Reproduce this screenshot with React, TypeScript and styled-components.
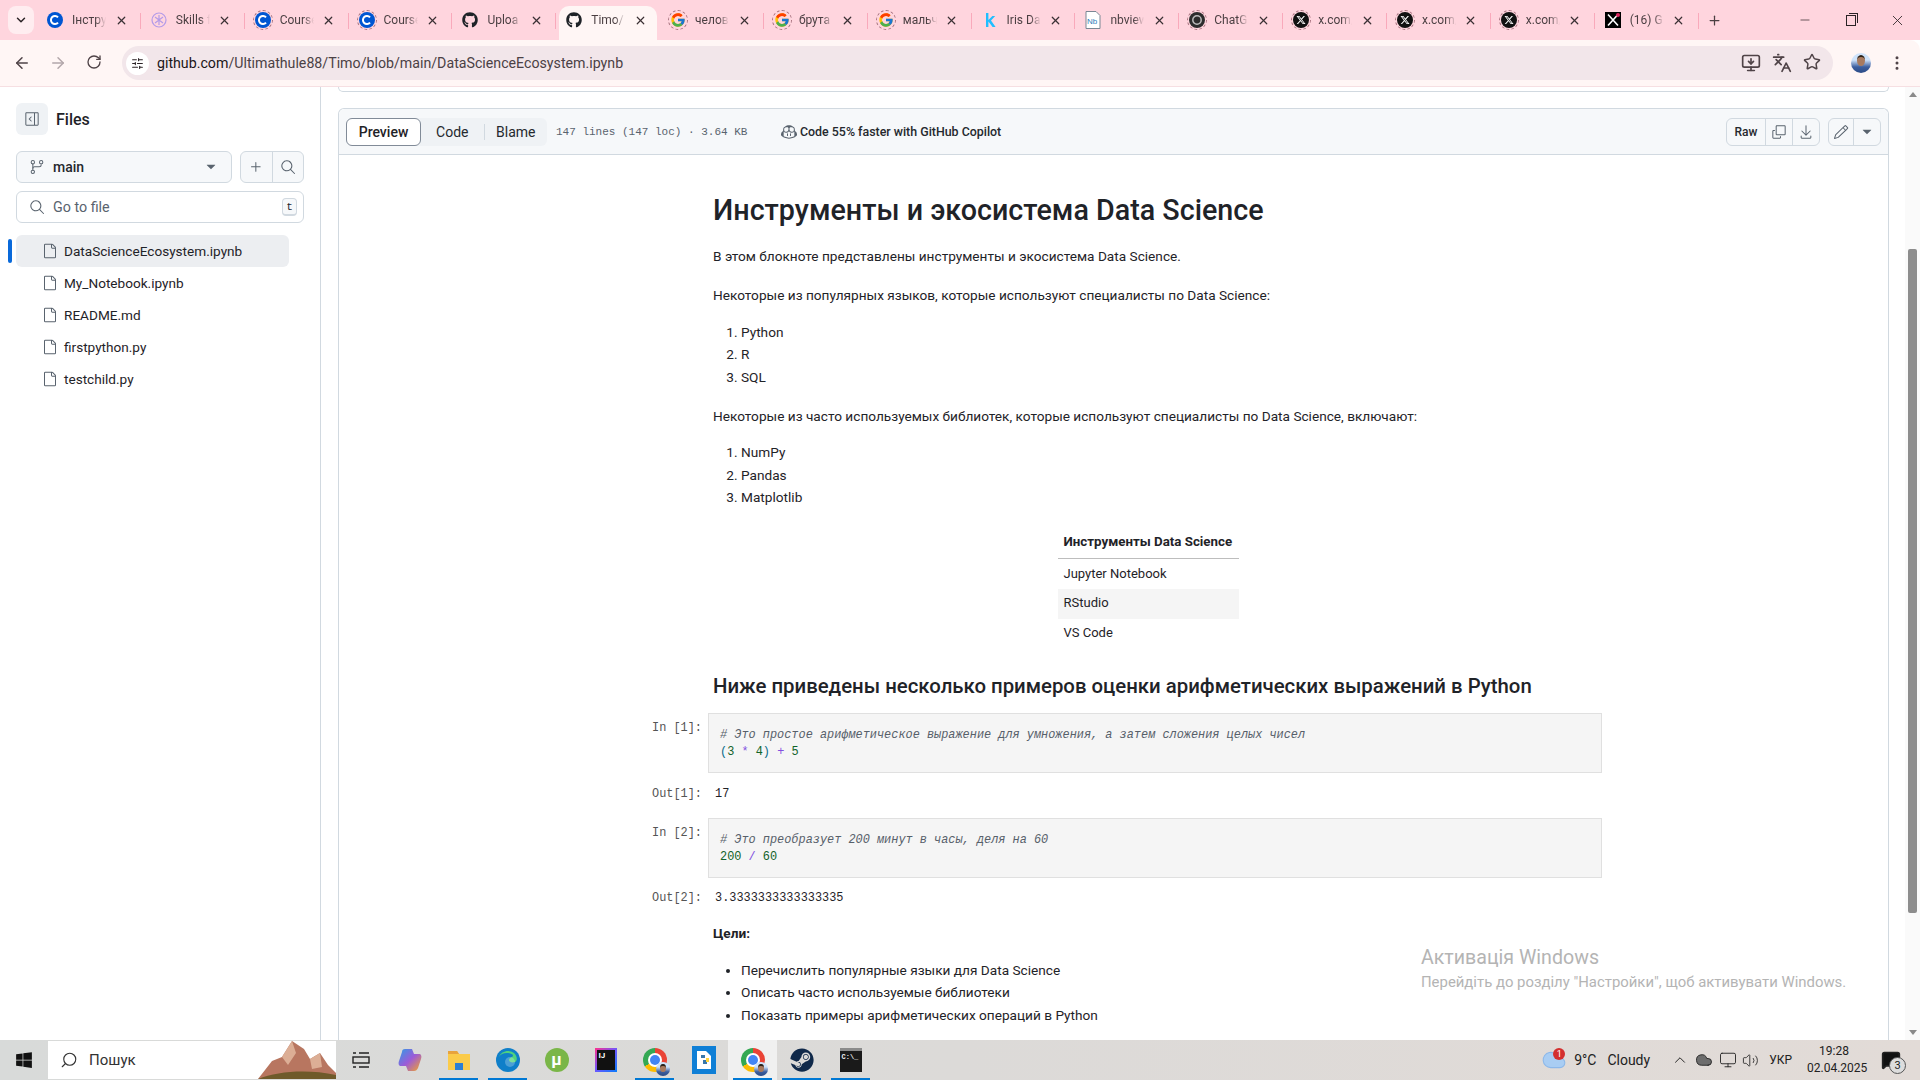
import React from 'react';
import styled, { createGlobalStyle } from 'styled-components';
import { FaGithub, FaXTwitter, FaSteam, FaWindows } from 'react-icons/fa6';
import { FcGoogle } from 'react-icons/fc';
import {
  GoCopilot,
  GoCopy,
  GoDownload,
  GoFile,
  GoGitBranch,
  GoPencil,
  GoPlus,
  GoSearch,
  GoSidebarExpand,
  GoTriangleDown,
} from 'react-icons/go';
import {
  ArrowLeft,
  ArrowRight,
  ChevronDown,
  ChevronUp,
  Cloud,
  Minus,
  MessageSquare,
  Monitor,
  MoreVertical,
  Plus,
  RotateCw,
  Search,
  SlidersHorizontal,
  Star,
  Languages,
  MonitorDown,
  Volume2,
  X,
} from 'lucide-react';

const UI_FONT = `Roboto, "Noto Sans", sans-serif`;
const MONO_FONT = `"Liberation Mono", monospace`;

const GlobalStyle = createGlobalStyle`
  html, body {
    margin: 0;
    padding: 0;
    height: 100%;
    overflow: hidden;
    background: #fff;
  }
  body {
    font-family: ${UI_FONT};
    color: #1f2328;
  }
  * {
    box-sizing: border-box;
  }
`;

const Screen = styled.div`
  position: relative;
  width: 1920px;
  height: 1080px;
  display: flex;
  flex-direction: column;
  overflow: hidden;
`;

/* browser chrome */

const TabStrip = styled.div`
  height: 40px;
  flex: none;
  background: #ffd5de;
  display: flex;
  align-items: flex-end;
  position: relative;
`;

const TabMenu = styled.div`
  width: 26px;
  height: 28px;
  margin: 0 3px 6px 8px;
  border-radius: 8px;
  background: #ffedf0;
  display: flex;
  align-items: center;
  justify-content: center;
  color: #2b2326;
`;

const Tab = styled.div<{ $active?: boolean }>`
  width: ${({ $active }) => ($active ? '97.85px' : '103.85px')};
  margin: ${({ $active }) => ($active ? '0 3px' : '0')};
  height: 34px;
  flex: none;
  padding: 0 0 6px ${({ $active }) => ($active ? '7px' : '10px')};
  display: flex;
  align-items: center;
  position: relative;
  background: ${({ $active }) => ($active ? '#fff6f5' : 'transparent')};
  border-radius: 10px 10px 0 0;

  &::after {
    content: '';
    display: ${({ $active }) => ($active ? 'none' : 'block')};
    position: absolute;
    right: 0;
    top: 7px;
    width: 1px;
    height: 16px;
    background: #f9a9bb;
  }
`;

const TabIcon = styled.div<{ $ring?: boolean }>`
  width: 16px;
  height: 16px;
  flex: none;
  display: flex;
  align-items: center;
  justify-content: center;
  position: relative;
  border-radius: 50%;
  outline: ${({ $ring }) => ($ring ? '1.5px dashed #a5707c' : 'none')};
  outline-offset: 1px;
`;

const TabTitle = styled.div`
  width: 34px;
  margin-left: 9px;
  font-size: 12px;
  color: #4b3f42;
  white-space: nowrap;
  overflow: hidden;
  mask-image: linear-gradient(to right, #000 70%, transparent 100%);
`;

const TabClose = styled.div`
  margin-left: 8px;
  width: 14px;
  display: flex;
  justify-content: center;
  color: #3a3034;
`;

const NewTab = styled.div`
  width: 32px;
  height: 28px;
  margin-bottom: 6px;
  display: flex;
  align-items: center;
  justify-content: center;
  color: #4b3f42;
`;

const WindowControls = styled.div`
  margin-left: auto;
  height: 40px;
  display: flex;
  align-self: flex-start;
`;

const WindowButton = styled.div`
  width: 46px;
  height: 40px;
  display: flex;
  align-items: center;
  justify-content: center;
  color: #2b2326;
`;

const RestoreGlyph = styled.div`
  width: 10px;
  height: 11px;
  border: 1px solid #2b2326;
  position: relative;

  &::after {
    content: '';
    position: absolute;
    top: -3px;
    right: -3px;
    width: 8px;
    height: 9px;
    border-top: 1px solid #2b2326;
    border-right: 1px solid #2b2326;
  }
`;

const Toolbar = styled.div`
  height: 47px;
  flex: none;
  background: #fff6f5;
  border-radius: 0 10px 0 0;
  border-bottom: 1px solid #f6dfe2;
  display: flex;
  align-items: center;
`;

const NavButton = styled.div<{ $dim?: boolean }>`
  width: 36px;
  display: flex;
  justify-content: center;
  color: ${({ $dim }) => ($dim ? '#b3a7aa' : '#4f4347')};
`;

const NavGroup = styled.div`
  display: flex;
  padding-left: 4px;
  width: 122px;
`;

const Omnibox = styled.div`
  width: 1711px;
  height: 34px;
  border-radius: 17px;
  background: #f2e6ea;
  display: flex;
  align-items: center;
  padding: 0 4px;
`;

const SiteBadge = styled.div`
  width: 23px;
  height: 23px;
  border-radius: 50%;
  background: #fff;
  display: flex;
  align-items: center;
  justify-content: center;
  color: #2b2326;
`;

const UrlText = styled.div`
  margin-left: 8px;
  font-size: 14.2px;
  color: #4b4145;
  span {
    color: #1b1518;
  }
`;

const OmniActions = styled.div`
  margin-left: auto;
  display: flex;
  gap: 11px;
  padding-right: 8px;
  color: #4f4347;
`;

const Avatar = styled.div<{ $size: number }>`
  width: ${({ $size }) => $size}px;
  height: ${({ $size }) => $size}px;
  flex: none;
  border-radius: 50%;
  background: linear-gradient(180deg, #cfe3fb 0%, #cfe3fb 35%, #3c5e9e 70%, #2b4a86 100%);
  position: relative;
  overflow: hidden;

  &::after {
    content: '';
    position: absolute;
    left: 30%;
    top: 12%;
    width: 40%;
    height: 45%;
    border-radius: 50%;
    background: #a87a5f;
    border-top: 2px solid #2a2018;
  }
`;

const ProfileSlot = styled.div`
  margin-left: 18px;
  display: flex;
  align-items: center;
  gap: 17px;
  color: #4f4347;
`;

/* page */

const Page = styled.div`
  flex: 1;
  min-height: 0;
  display: flex;
  background: #fff;
`;

const Sidebar = styled.aside`
  width: 321px;
  flex: none;
  border-right: 1px solid #d1d9e0;
  padding: 16px 16px 0;
`;

const SidebarHead = styled.div`
  display: flex;
  align-items: center;
  gap: 8px;
  height: 32px;
`;

const SquareToggle = styled.div`
  width: 32px;
  height: 32px;
  border-radius: 6px;
  background: #eff2f5;
  color: #59636e;
  display: flex;
  align-items: center;
  justify-content: center;
`;

const FilesTitle = styled.div`
  font-size: 16px;
  font-weight: 500;
`;

const BranchRow = styled.div`
  display: flex;
  margin-top: 16px;
  width: 288px;
  gap: 8px;
`;

const BranchButton = styled.div`
  flex: 1;
  height: 32px;
  border: 1px solid #d1d9e0;
  border-radius: 6px;
  background: #f6f8fa;
  display: flex;
  align-items: center;
  padding: 0 12px;
  gap: 8px;
  color: #59636e;
  font-size: 14px;

  strong {
    color: #25292e;
    font-weight: 500;
    flex: 1;
  }
`;

const IconPair = styled.div`
  width: 64px;
  height: 32px;
  display: flex;
  border: 1px solid #d1d9e0;
  border-radius: 6px;
  background: #f6f8fa;
  color: #59636e;
`;

const PairCell = styled.div<{ $divider?: boolean }>`
  flex: 1;
  display: flex;
  align-items: center;
  justify-content: center;
  border-right: ${({ $divider }) => ($divider ? '1px solid #d1d9e0' : 'none')};
`;

const FileSearch = styled.div`
  width: 288px;
  height: 32px;
  margin-top: 8px;
  border: 1px solid #d1d9e0;
  border-radius: 6px;
  display: flex;
  align-items: center;
  padding: 0 6px 0 12px;
  gap: 8px;
  color: #59636e;
  font-size: 14.3px;
`;

const Kbd = styled.div`
  margin-left: auto;
  width: 15px;
  height: 18px;
  border: 1px solid #d1d9e0;
  border-bottom-width: 2px;
  border-radius: 4px;
  background: #f6f8fa;
  font-family: ${MONO_FONT};
  font-size: 11px;
  color: #25292e;
  display: flex;
  align-items: center;
  justify-content: center;
`;

const FileTree = styled.div`
  margin-top: 12px;
  width: 273px;
`;

const FileRow = styled.div<{ $active?: boolean }>`
  position: relative;
  height: 32px;
  border-radius: 6px;
  background: ${({ $active }) => ($active ? '#eceef1' : 'transparent')};
  padding-left: 26px;
  display: flex;
  align-items: center;
  gap: 6px;
  font-size: 13.6px;
  color: #1f2328;

  svg {
    color: #59636e;
    flex: none;
  }

  &::before {
    content: '';
    display: ${({ $active }) => ($active ? 'block' : 'none')};
    position: absolute;
    left: -8px;
    top: 4px;
    width: 4px;
    height: 24px;
    border-radius: 2px;
    background: #0969da;
  }
`;

const Content = styled.main`
  flex: 1;
  min-width: 0;
  padding-left: 17px;
  overflow: hidden;
`;

const PreviousBox = styled.div`
  width: 1551px;
  height: 5px;
  border: 1px solid #d1d9e0;
  border-top: none;
  border-radius: 0 0 6px 6px;
`;

const BlobBox = styled.section`
  width: 1551px;
  margin-top: 16px;
  border: 1px solid #d1d9e0;
  border-bottom: none;
  border-radius: 6px 6px 0 0;
  min-height: 1000px;
`;

const BlobHeader = styled.header`
  height: 46px;
  background: #f6f8fa;
  border-bottom: 1px solid #d1d9e0;
  border-radius: 6px 6px 0 0;
  display: flex;
  align-items: center;
  padding: 0 7px;
  font-size: 14px;
`;

const Segmented = styled.div`
  width: 201px;
  height: 28px;
  background: #eff2f5;
  border-radius: 6px;
  display: flex;
  align-items: center;
`;

const SegmentPreview = styled.div`
  width: 75px;
  height: 28px;
  background: #fff;
  border: 1px solid #818b98;
  border-radius: 6px;
  display: flex;
  align-items: center;
  justify-content: center;
  font-weight: 500;
`;

const Segment = styled.div<{ $divider?: boolean }>`
  flex: 1;
  height: 16px;
  display: flex;
  align-items: center;
  justify-content: center;
  color: #25292e;
  border-right: ${({ $divider }) => ($divider ? '1px solid #d1d9e0' : 'none')};
`;

const BlobStats = styled.div`
  margin-left: 9px;
  font-family: ${MONO_FONT};
  font-size: 11px;
  color: #59636e;
  white-space: nowrap;
  width: 225px;
`;

const CopilotNote = styled.div`
  display: flex;
  align-items: center;
  gap: 3px;
  font-size: 12.4px;
  font-weight: 500;
  color: #25292e;
  white-space: nowrap;

  svg {
    color: #59636e;
  }
`;

const HeaderActions = styled.div`
  margin-left: auto;
  display: flex;
  gap: 8px;
`;

const ButtonGroup = styled.div`
  display: flex;
  height: 28px;
  border: 1px solid #d1d9e0;
  border-radius: 6px;
  color: #59636e;
  background: #f6f8fa;
`;

const GroupButton = styled.div<{ $w: number; $divider?: boolean }>`
  width: ${({ $w }) => $w}px;
  display: flex;
  align-items: center;
  justify-content: center;
  font-size: 12px;
  font-weight: 500;
  color: #59636e;
  border-right: ${({ $divider }) => ($divider ? '1px solid #d1d9e0' : 'none')};
`;

const RawLabel = styled.span`
  color: #25292e;
`;

/* notebook */

const Notebook = styled.div`
  padding-left: 313px;
  width: 1267px;
`;

const Markdown = styled.div`
  margin-left: 61px;
  width: 870px;
  font-size: 13.65px;
  line-height: 22.4px;
  color: #1f2328;
`;

const Title = styled.h1`
  margin: 0;
  padding-top: 35px;
  font-size: 28.7px;
  line-height: 40px;
  font-weight: 500;
  color: #1f2328;
`;

const Para = styled.p`
  margin: 17px 0 0;
`;

const Lead = styled.p`
  margin: 15px 0 0;
`;

const Numbered = styled.ol`
  margin: 14px 0 0;
  padding-left: 28px;
`;

const Bulleted = styled.ul`
  margin: 15px 0 0;
  padding-left: 28px;
`;

const Item = styled.li``;

const TableWrap = styled.div`
  margin-top: 18px;
  display: flex;
  justify-content: center;
`;

const ToolTable = styled.table`
  width: 181px;
  border-collapse: collapse;
  font-size: 13px;

  th {
    height: 32px;
    padding: 0 6px;
    text-align: left;
    font-size: 13.3px;
    font-weight: 700;
    white-space: nowrap;
    border-bottom: 1px solid #bdbdbd;
  }

  td {
    height: 30px;
    padding: 0 6px;
  }

  tbody tr:nth-child(even) {
    background: #f5f5f5;
  }
`;

const SectionTitle = styled.h2`
  margin: 22px 0 0;
  font-size: 20.37px;
  line-height: 30px;
  font-weight: 500;
`;

const CellRow = styled.div<{ $gap: number }>`
  display: flex;
  margin-top: ${({ $gap }) => $gap}px;
  font-family: ${MONO_FONT};
  font-size: 11.9px;
  line-height: 17px;
`;

const Prompt = styled.div<{ $out?: boolean }>`
  width: 56px;
  flex: none;
  padding-top: ${({ $out }) => ($out ? '0' : '7px')};
  color: #555;
`;

const CodeCell = styled.pre`
  margin: 0;
  width: 894px;
  height: 60px;
  padding: 13px 11px;
  background: #f5f5f5;
  border: 1px solid #e0e0e0;
  font: inherit;
  color: #1f2328;
`;

const OutValue = styled.div`
  padding-left: 7px;
  color: #1f2328;
`;

const Comment = styled.span`
  font-style: italic;
  color: #57606a;
`;

const Num = styled.span`
  color: #116329;
`;

const Op = styled.span`
  color: #8250df;
`;

const Paren = styled.span`
  color: #0a6b8a;
`;

const Scrollbar = styled.div`
  width: 15px;
  flex: none;
  background: #fafafa;
  display: flex;
  flex-direction: column;
  align-items: center;
`;

const ScrollArrow = styled.div<{ $down?: boolean }>`
  width: 0;
  height: 0;
  margin-top: ${({ $down }) => ($down ? 'auto' : '5px')};
  margin-bottom: ${({ $down }) => ($down ? '5px' : '0')};
  border-left: 4px solid transparent;
  border-right: 4px solid transparent;
  ${({ $down }) => ($down ? 'border-top: 5px solid #8a8a8a;' : 'border-bottom: 5px solid #8a8a8a;')}
`;

const ScrollThumb = styled.div`
  width: 9px;
  height: 664px;
  margin-top: 152px;
  background: #8d8d8d;
  border-radius: 2px;
`;

/* windows taskbar */

const Taskbar = styled.div`
  height: 40px;
  flex: none;
  background: linear-gradient(90deg, #d8dad9 0%, #dcdad8 50%, #e2dbd7 100%);
  display: flex;
  align-items: center;
`;

const StartSlot = styled.div`
  width: 48px;
  display: flex;
  justify-content: center;
  color: #111;
`;

const SearchBox = styled.div`
  width: 288px;
  height: 38px;
  background: #fff;
  display: flex;
  align-items: center;
  padding-left: 12px;
  gap: 11px;
  font-size: 15px;
  color: #333;
  position: relative;
  overflow: hidden;
`;

const Mountain = styled.svg`
  position: absolute;
  right: 0;
  bottom: 0;
`;

const AppList = styled.div`
  display: flex;
  height: 40px;
`;

const AppSlot = styled.div<{ $open?: boolean; $focus?: boolean }>`
  width: 49px;
  height: 40px;
  display: flex;
  align-items: center;
  justify-content: center;
  background: ${({ $focus }) => ($focus ? '#f0f0f0' : 'transparent')};
  position: relative;

  &::after {
    content: '';
    display: ${({ $open }) => ($open ? 'block' : 'none')};
    position: absolute;
    left: 5px;
    right: 5px;
    bottom: 0;
    height: 2px;
    background: #0078d4;
  }
`;

const ChromeDot = styled.div`
  width: 24px;
  height: 24px;
  border-radius: 50%;
  background: conic-gradient(#ea4335 0 33%, #fbbc05 33% 66%, #34a853 66% 100%);
  position: relative;

  &::after {
    content: '';
    position: absolute;
    inset: 7px;
    border-radius: 50%;
    background: #4285f4;
    box-shadow: 0 0 0 2px #fff;
  }
`;

const AvatarBadge = styled.div`
  position: absolute;
  right: 9px;
  bottom: 4px;
  z-index: 1;
`;

const IdeSquare = styled.div`
  width: 22px;
  height: 24px;
  background: linear-gradient(135deg, #ff318c, #6b57ff 50%, #087cfa);
  padding: 2px;
`;

const IdeInner = styled.div`
  width: 100%;
  height: 100%;
  background: #111;
  color: #fff;
  font: 700 8px/9px ${UI_FONT};
  padding: 1px 2px;
`;

const TerminalSquare = styled.div`
  width: 22px;
  height: 24px;
  background: #1a1a1a;
  border-top: 3px solid #8b8b8b;
  color: #eee;
  font: 700 7px/9px ${MONO_FONT};
  padding: 2px;
`;

const TorrentDot = styled.div`
  width: 24px;
  height: 24px;
  border-radius: 50%;
  background: #7ab648;
  color: #fff;
  font: 700 17px/22px ${UI_FONT};
  text-align: center;
`;

const Tray = styled.div`
  margin-left: auto;
  display: flex;
  align-items: center;
  height: 40px;
  color: #222;
`;

const Weather = styled.div`
  display: flex;
  align-items: center;
  position: relative;
  width: 127px;
  font-size: 14px;
  padding-left: 33px;
  gap: 11px;
  white-space: nowrap;
`;

const WeatherCloud = styled.div`
  position: absolute;
  left: 0;
  top: -5px;
  color: #8cb8ea;
`;

const RedBadge = styled.div`
  position: absolute;
  left: 12px;
  top: 1px;
  width: 12px;
  height: 12px;
  border-radius: 50%;
  background: #d32f2f;
  color: #fff;
  font-size: 9px;
  line-height: 12px;
  text-align: center;
`;

const TrayIcon = styled.div<{ $w: number }>`
  width: ${({ $w }) => $w}px;
  display: flex;
  justify-content: center;
`;

const Lang = styled.div`
  margin-left: 9px;
  font-size: 12px;
`;

const Clock = styled.div`
  margin-left: 15px;
  width: 54px;
  font-size: 12px;
  line-height: 17px;
  text-align: center;
  white-space: nowrap;
`;

const Notifications = styled.div`
  width: 59px;
  display: flex;
  justify-content: center;
  position: relative;
`;

const NotifyCount = styled.div`
  position: absolute;
  left: 28px;
  top: 7px;
  width: 17px;
  height: 17px;
  border-radius: 50%;
  border: 1px solid #555;
  background: #ddd;
  font-size: 11px;
  line-height: 15px;
  text-align: center;
`;

const Watermark = styled.div`
  position: absolute;
  left: 1421px;
  top: 944px;
  color: #b4b4b4;
  font-size: 14.9px;
  line-height: 20px;
  white-space: nowrap;
`;

const WatermarkTitle = styled.div`
  font-size: 19.6px;
  line-height: 28px;
`;

const RoundX = styled.span`
  display: flex;
  width: 16px;
  height: 16px;
  border-radius: 8px;
  background: #111;
  align-items: center;
  justify-content: center;
`;

const MirroredSearch = styled(Search)`
  transform: scaleX(-1);
`;

const BlueC = () => (
  <svg width="16" height="16" viewBox="0 0 16 16">
    <circle cx="8" cy="8" r="8" fill="#0056d2" />
    <path d="M11 5.4a4 4 0 1 0 0 5.2" fill="none" stroke="#fff" strokeWidth="2" />
  </svg>
);

const SkillsIcon = () => (
  <svg width="16" height="16" viewBox="0 0 16 16" fill="none" stroke="#b49be8" strokeWidth="1.2">
    <circle cx="8" cy="8" r="7" />
    <path d="M8 3v10M4 5l8 6M12 5l-8 6" />
  </svg>
);

const KaggleK = () => (
  <svg width="16" height="16" viewBox="0 0 16 16" fill="#20beff">
    <path d="M4 1h2.4v7l4-4h2.8L9 8.4 13.6 15h-3L6.400 9.600V15H4z" />
  </svg>
);

const NbIcon = () => (
  <svg width="16" height="18" viewBox="0 0 16 18">
    <path d="M1 .5h10l4 4v13H1z" fill="#fff" stroke="#7a8794" />
    <text x="2" y="13" fontSize="8" fontFamily="Liberation Sans" fill="#2b7bb9">Nb</text>
  </svg>
);

const GptIcon = () => (
  <svg width="16" height="16" viewBox="0 0 16 16">
    <circle cx="8" cy="8" r="8" fill="#2d2d2d" />
    <circle cx="8" cy="8" r="4.200" fill="none" stroke="#bbb" strokeWidth="1.500" />
  </svg>
);

const XBlack = () => (
  <TabIcon>
    <svg width="16" height="16" viewBox="0 0 16 16">
      <rect width="16" height="16" fill="#000" />
      <path d="M3 2.500l10 11M13 2.500l-10 11" stroke="#fff" strokeWidth="1.600" />
      <circle cx="13" cy="3" r="2" fill="#e0245e" />
    </svg>
  </TabIcon>
);

const XRound = () => (
  <RoundX>
    <FaXTwitter size={10} color="#fff" />
  </RoundX>
);

const tabs: { title: string; icon: React.ReactNode; ring?: boolean; active?: boolean }[] = [
  { title: 'Інстру', icon: <BlueC /> },
  { title: 'Skills f', icon: <SkillsIcon /> },
  { title: 'Course', icon: <BlueC />, ring: true },
  { title: 'Course', icon: <BlueC />, ring: true },
  { title: 'Uploa', icon: <FaGithub size={16} color="#1f2328" /> },
  { title: 'Timo/', icon: <FaGithub size={16} color="#1f2328" />, active: true },
  { title: 'челов', icon: <FcGoogle size={16} />, ring: true },
  { title: 'брута', icon: <FcGoogle size={16} />, ring: true },
  { title: 'мальч', icon: <FcGoogle size={16} />, ring: true },
  { title: 'Iris Da', icon: <KaggleK /> },
  { title: 'nbview', icon: <NbIcon /> },
  { title: 'ChatG', icon: <GptIcon />, ring: true },
  { title: 'x.com/', icon: <XRound />, ring: true },
  { title: 'x.com/', icon: <XRound />, ring: true },
  { title: 'x.com/', icon: <XRound />, ring: true },
];

const files = [
  'DataScienceEcosystem.ipynb',
  'My_Notebook.ipynb',
  'README.md',
  'firstpython.py',
  'testchild.py',
];

const App: React.FC = () => {
  return (
    <Screen>
      <GlobalStyle />
      <TabStrip>
        <TabMenu>
          <ChevronDown size={14} strokeWidth={2.5} />
        </TabMenu>
        {tabs.map((tab, i) => (
          <Tab key={i} $active={tab.active}>
            <TabIcon $ring={tab.ring}>{tab.icon}</TabIcon>
            <TabTitle>{tab.title}</TabTitle>
            <TabClose>
              <X size={13} strokeWidth={2.2} />
            </TabClose>
          </Tab>
        ))}
        <Tab>
          <XBlack />
          <TabTitle>(16) G</TabTitle>
          <TabClose>
            <X size={13} strokeWidth={2.2} />
          </TabClose>
        </Tab>
        <NewTab>
          <Plus size={15} />
        </NewTab>
        <WindowControls>
          <WindowButton>
            <Minus size={14} strokeWidth={1.2} />
          </WindowButton>
          <WindowButton>
            <RestoreGlyph />
          </WindowButton>
          <WindowButton>
            <X size={17} strokeWidth={1.2} />
          </WindowButton>
        </WindowControls>
      </TabStrip>

      <Toolbar>
        <NavGroup>
          <NavButton>
            <ArrowLeft size={18} />
          </NavButton>
          <NavButton $dim>
            <ArrowRight size={18} />
          </NavButton>
          <NavButton>
            <RotateCw size={16} />
          </NavButton>
        </NavGroup>
        <Omnibox>
          <SiteBadge>
            <SlidersHorizontal size={13} />
          </SiteBadge>
          <UrlText>
            <span>github.com</span>/Ultimathule88/Timo/blob/main/DataScienceEcosystem.ipynb
          </UrlText>
          <OmniActions>
            <MonitorDown size={20} />
            <Languages size={20} />
            <Star size={18} />
          </OmniActions>
        </Omnibox>
        <ProfileSlot>
          <Avatar $size={20} />
          <MoreVertical size={18} />
        </ProfileSlot>
      </Toolbar>

      <Page>
        <Sidebar>
          <SidebarHead>
            <SquareToggle>
              <GoSidebarExpand size={16} />
            </SquareToggle>
            <FilesTitle>Files</FilesTitle>
          </SidebarHead>
          <BranchRow>
            <BranchButton>
              <GoGitBranch size={16} />
              <strong>main</strong>
              <GoTriangleDown size={16} />
            </BranchButton>
            <IconPair>
              <PairCell $divider>
                <GoPlus size={16} />
              </PairCell>
              <PairCell>
                <GoSearch size={16} />
              </PairCell>
            </IconPair>
          </BranchRow>
          <FileSearch>
            <GoSearch size={16} />
            Go to file
            <Kbd>t</Kbd>
          </FileSearch>
          <FileTree>
            {files.map((name, i) => (
              <FileRow key={name} $active={i === 0}>
                <GoFile size={16} />
                {name}
              </FileRow>
            ))}
          </FileTree>
        </Sidebar>

        <Content>
          <PreviousBox />
          <BlobBox>
            <BlobHeader>
              <Segmented>
                <SegmentPreview>Preview</SegmentPreview>
                <Segment $divider>Code</Segment>
                <Segment>Blame</Segment>
              </Segmented>
              <BlobStats>147 lines (147 loc) · 3.64 KB</BlobStats>
              <CopilotNote>
                <GoCopilot size={16} />
                Code 55% faster with GitHub Copilot
              </CopilotNote>
              <HeaderActions>
                <ButtonGroup>
                  <GroupButton $w={39} $divider>
                    <RawLabel>Raw</RawLabel>
                  </GroupButton>
                  <GroupButton $w={27} $divider>
                    <GoCopy size={16} />
                  </GroupButton>
                  <GroupButton $w={26}>
                    <GoDownload size={16} />
                  </GroupButton>
                </ButtonGroup>
                <ButtonGroup>
                  <GroupButton $w={25} $divider>
                    <GoPencil size={16} />
                  </GroupButton>
                  <GroupButton $w={26}>
                    <GoTriangleDown size={16} />
                  </GroupButton>
                </ButtonGroup>
              </HeaderActions>
            </BlobHeader>

            <Notebook>
              <Markdown>
                <Title>Инструменты и экосистема Data Science</Title>
                <Lead>В этом блокноте представлены инструменты и экосистема Data Science.</Lead>
                <Para>Некоторые из популярных языков, которые используют специалисты по Data Science:</Para>
                <Numbered>
                  <Item>Python</Item>
                  <Item>R</Item>
                  <Item>SQL</Item>
                </Numbered>
                <Para>
                  Некоторые из часто используемых библиотек, которые используют специалисты по Data Science, включают:
                </Para>
                <Numbered>
                  <Item>NumPy</Item>
                  <Item>Pandas</Item>
                  <Item>Matplotlib</Item>
                </Numbered>
                <TableWrap>
                  <ToolTable>
                    <thead>
                      <tr>
                        <th>Инструменты Data Science</th>
                      </tr>
                    </thead>
                    <tbody>
                      <tr>
                        <td>Jupyter Notebook</td>
                      </tr>
                      <tr>
                        <td>RStudio</td>
                      </tr>
                      <tr>
                        <td>VS Code</td>
                      </tr>
                    </tbody>
                  </ToolTable>
                </TableWrap>
                <SectionTitle>Ниже приведены несколько примеров оценки арифметических выражений в Python</SectionTitle>
              </Markdown>

              <CellRow $gap={12}>
                <Prompt>In [1]:</Prompt>
                <CodeCell>
                  <Comment># Это простое арифметическое выражение для умножения, а затем сложения целых чисел</Comment>
                  {'\n'}
                  <Paren>(</Paren>
                  <Num>3</Num> <Op>*</Op> <Num>4</Num>
                  <Paren>)</Paren> <Op>+</Op> <Num>5</Num>
                </CodeCell>
              </CellRow>
              <CellRow $gap={13}>
                <Prompt $out>Out[1]:</Prompt>
                <OutValue>17</OutValue>
              </CellRow>
              <CellRow $gap={15}>
                <Prompt>In [2]:</Prompt>
                <CodeCell>
                  <Comment># Это преобразует 200 минут в часы, деля на 60</Comment>
                  {'\n'}
                  <Num>200</Num> <Op>/</Op> <Num>60</Num>
                </CodeCell>
              </CellRow>
              <CellRow $gap={12}>
                <Prompt $out>Out[2]:</Prompt>
                <OutValue>3.3333333333333335</OutValue>
              </CellRow>

              <Markdown>
                <Lead>
                  <b>Цели:</b>
                </Lead>
                <Bulleted>
                  <Item>Перечислить популярные языки для Data Science</Item>
                  <Item>Описать часто используемые библиотеки</Item>
                  <Item>Показать примеры арифметических операций в Python</Item>
                </Bulleted>
              </Markdown>
            </Notebook>
          </BlobBox>
        </Content>

        <Scrollbar>
          <ScrollArrow />
          <ScrollThumb />
          <ScrollArrow $down />
        </Scrollbar>
      </Page>

      <Taskbar>
        <StartSlot>
          <FaWindows size={18} />
        </StartSlot>
        <SearchBox>
          <MirroredSearch size={18} strokeWidth={1.5} />
          Пошук
          <Mountain width="78" height="38" viewBox="0 0 78 38">
            <path d="M0 38 L14 20 L24 16 L34 0 L46 8 L52 18 L62 12 L70 24 L78 32 V38 Z" fill="#b87660" />
            <path d="M24 16 L34 0 L38 12 L30 24 Z M52 18 L62 12 L64 26 L54 28 Z" fill="#dcae95" />
            <path d="M0 38 C20 30 50 28 78 34 V38 Z" fill="#6f5a2a" />
          </Mountain>
        </SearchBox>
        <AppList>
          <AppSlot>
            <svg width="18" height="18" viewBox="0 0 18 18" fill="none" stroke="#222" strokeWidth="1.400">
              <path d="M1 2h3M1 16h3M7 2h10M7 16h10" />
              <rect x="1" y="6" width="16" height="6" />
            </svg>
          </AppSlot>
          <AppSlot>
            <svg width="26" height="26" viewBox="0 0 26 26">
              <defs>
                <linearGradient id="cop" x1="0" y1="0" x2="1" y2="1">
                  <stop offset="0" stopColor="#2f9be6" />
                  <stop offset="0.5" stopColor="#9c5bd8" />
                  <stop offset="1" stopColor="#f5a623" />
                </linearGradient>
              </defs>
              <path d="M8 2h7l2 5h5c2 0 3 2 2 5l-3 9c-1 2-2 3-4 3h-6l-2-5H4c-2 0-3-2-2-5l3-9c0-2 1-3 3-3z" fill="url(#cop)" />
            </svg>
          </AppSlot>
          <AppSlot $open>
            <svg width="24" height="24" viewBox="0 0 24 24">
              <path d="M1 3h9l2 3h11v16H1z" fill="#fbcb4a" />
              <path d="M1 3h9l2 3H1z" fill="#e8a33d" />
              <rect x="8" y="15" width="8" height="7" fill="#2d7fd3" />
            </svg>
          </AppSlot>
          <AppSlot $open>
            <svg width="24" height="24" viewBox="0 0 24 24">
              <circle cx="12" cy="12" r="12" fill="#0f7fc9" />
              <path d="M3 9c2-6 10-8 15-4 3 3 4 7 1 9-3 1-6 0-6-2 0-3 4-2 4-5-3-3-12-3-14 2z" fill="#4fd27d" />
              <circle cx="14" cy="14" r="5" fill="#fff" opacity="0.25" />
            </svg>
          </AppSlot>
          <AppSlot>
            <TorrentDot>µ</TorrentDot>
          </AppSlot>
          <AppSlot>
            <IdeSquare>
              <IdeInner>IJ</IdeInner>
            </IdeSquare>
          </AppSlot>
          <AppSlot $open>
            <ChromeDot />
            <AvatarBadge>
              <Avatar $size={14} />
            </AvatarBadge>
          </AppSlot>
          <AppSlot>
            <svg width="24" height="28" viewBox="0 0 24 28">
              <rect width="24" height="28" fill="#0f7fd6" />
              <path d="M5 5h9l5 5v13H5z" fill="#fff" />
              <path d="M9 9h4v3H9zM11 14h4v4h-4z" fill="#3776ab" />
              <path d="M14 12h3v4h-3z" fill="#ffd43b" />
            </svg>
          </AppSlot>
          <AppSlot $open $focus>
            <ChromeDot />
            <AvatarBadge>
              <Avatar $size={14} />
            </AvatarBadge>
          </AppSlot>
          <AppSlot $open>
            <FaSteam size={24} color="#10294a" />
          </AppSlot>
          <AppSlot $open>
            <TerminalSquare>C:\_</TerminalSquare>
          </AppSlot>
        </AppList>
        <Tray>
          <Weather>
            <WeatherCloud>
              <Cloud size={26} fill="#a9cdf3" strokeWidth={1} />
              <RedBadge>1</RedBadge>
            </WeatherCloud>
            <span>9°C</span>
            <span>Cloudy</span>
          </Weather>
          <TrayIcon $w={24}>
            <ChevronUp size={18} strokeWidth={1.3} />
          </TrayIcon>
          <TrayIcon $w={24}>
            <Cloud size={18} fill="#6d6d6d" strokeWidth={1.2} />
          </TrayIcon>
          <TrayIcon $w={24}>
            <Monitor size={18} strokeWidth={1.2} />
          </TrayIcon>
          <TrayIcon $w={20}>
            <Volume2 size={17} strokeWidth={1.2} />
          </TrayIcon>
          <Lang>УКР</Lang>
          <Clock>
            19:28
            <br />
            02.04.2025
          </Clock>
          <Notifications>
            <MessageSquare size={20} fill="#111" />
            <NotifyCount>3</NotifyCount>
          </Notifications>
        </Tray>
      </Taskbar>

      <Watermark>
        <WatermarkTitle>Активація Windows</WatermarkTitle>
        Перейдіть до розділу "Настройки", щоб активувати Windows.
      </Watermark>
    </Screen>
  );
};

export default App;
